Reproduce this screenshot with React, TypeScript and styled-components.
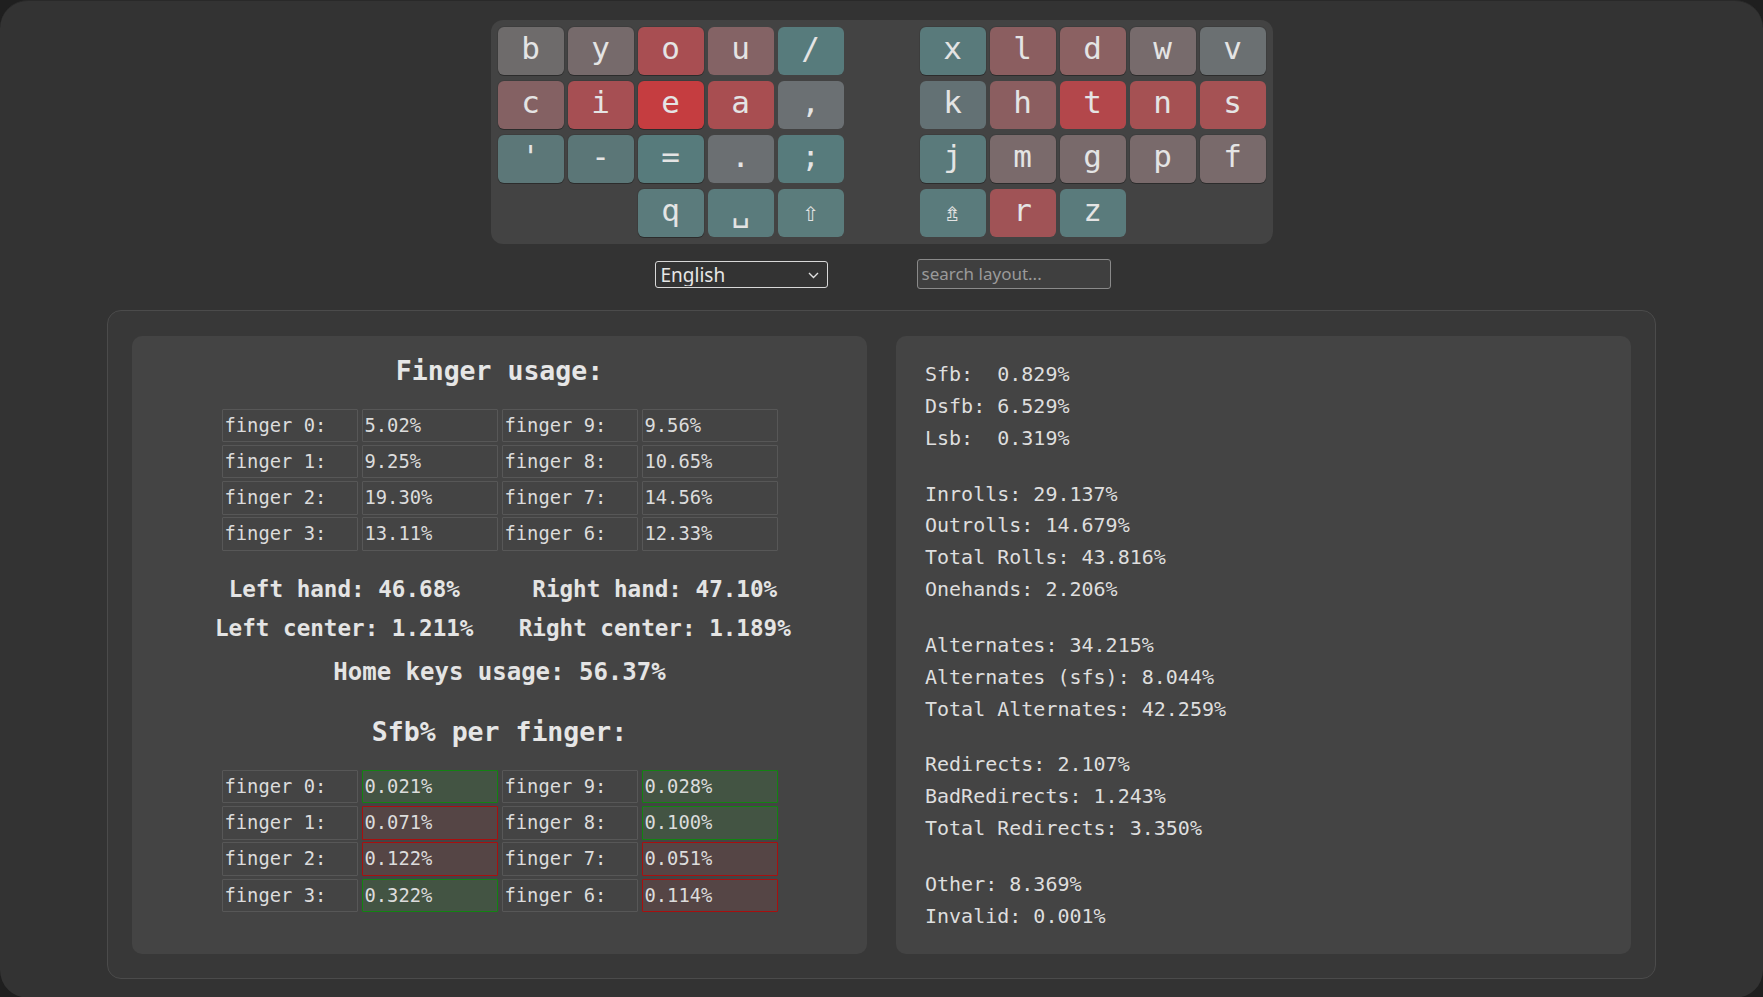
import styled, { createGlobalStyle } from "styled-components";

const GlobalStyle = createGlobalStyle`
  html, body {
    margin: 0;
    padding: 0;
    background: #1f1f1f;
  }
  body {
    font-family: "DejaVu Sans Mono", "Liberation Mono", monospace;
    color: #e0e0e0;
  }
  * {
    box-sizing: border-box;
  }
`;

type KeyData = { label: string; color: string; edge?: boolean; small?: boolean } | null;

const leftHand: KeyData[] = [
  { label: "b", color: "#6e6b6b", edge: true },
  { label: "y", color: "#766a6b", edge: true },
  { label: "o", color: "#a84e52", edge: true },
  { label: "u", color: "#846365" },
  { label: "/", color: "#577b7c" },
  { label: "c", color: "#846163", edge: true },
  { label: "i", color: "#a64f53", edge: true },
  { label: "e", color: "#c53d40", edge: true },
  { label: "a", color: "#a84e51" },
  { label: ",", color: "#6b7073" },
  { label: "'", color: "#5c7778", edge: true },
  { label: "-", color: "#5b7677", edge: true },
  { label: "=", color: "#577b7c", edge: true },
  { label: ".", color: "#6b6f72" },
  { label: ";", color: "#577b7c" },
  null,
  null,
  { label: "q", color: "#5b7b7c", edge: true },
  { label: "␣", color: "#5a7b7c" },
  { label: "⇧", color: "#5b7c7c", small: true },
];

const rightHand: KeyData[] = [
  { label: "x", color: "#597a7b", edge: true },
  { label: "l", color: "#8b5e60", edge: true },
  { label: "d", color: "#8b6162", edge: true },
  { label: "w", color: "#776b6c", edge: true },
  { label: "v", color: "#6b7072", edge: true },
  { label: "k", color: "#637174" },
  { label: "h", color: "#8b5e60" },
  { label: "t", color: "#b3474b" },
  { label: "n", color: "#a55153" },
  { label: "s", color: "#a55254" },
  { label: "j", color: "#5a7a7b", edge: true },
  { label: "m", color: "#7a6a6b", edge: true },
  { label: "g", color: "#796a6b", edge: true },
  { label: "p", color: "#796a6b", edge: true },
  { label: "f", color: "#796a6b", edge: true },
  { label: "⇯", color: "#5a7b7c", small: true },
  { label: "r", color: "#a05356" },
  { label: "z", color: "#5a7b7c" },
  null,
  null,
];

const fingerUsage = [
  ["finger 0:", "5.02%", "finger 9:", "9.56%"],
  ["finger 1:", "9.25%", "finger 8:", "10.65%"],
  ["finger 2:", "19.30%", "finger 7:", "14.56%"],
  ["finger 3:", "13.11%", "finger 6:", "12.33%"],
];

type Tone = "plain" | "good" | "bad";

const sfbPerFinger: [string, string, Tone, string, string, Tone][] = [
  ["finger 0:", "0.021%", "good", "finger 9:", "0.028%", "good"],
  ["finger 1:", "0.071%", "bad", "finger 8:", "0.100%", "good"],
  ["finger 2:", "0.122%", "bad", "finger 7:", "0.051%", "bad"],
  ["finger 3:", "0.322%", "good", "finger 6:", "0.114%", "bad"],
];

const statGroups = [
  ["Sfb:  0.829%", "Dsfb: 6.529%", "Lsb:  0.319%"],
  ["Inrolls: 29.137%", "Outrolls: 14.679%", "Total Rolls: 43.816%", "Onehands: 2.206%"],
  ["Alternates: 34.215%", "Alternates (sfs): 8.044%", "Total Alternates: 42.259%"],
  ["Redirects: 2.107%", "BadRedirects: 1.243%", "Total Redirects: 3.350%"],
  ["Other: 8.369%", "Invalid: 0.001%"],
];

const App = () => {
  return (
    <>
      <GlobalStyle />
      <Page>
        <KeyboardPanel>
          <Hand>
            {leftHand.map((key, i) =>
              key ? (
                <Key key={i} $color={key.color} $edge={key.edge} $small={key.small}>
                  {key.label}
                </Key>
              ) : (
                <EmptySlot key={i} />
              ),
            )}
          </Hand>
          <Hand>
            {rightHand.map((key, i) =>
              key ? (
                <Key key={i} $color={key.color} $edge={key.edge} $small={key.small}>
                  {key.label}
                </Key>
              ) : (
                <EmptySlot key={i} />
              ),
            )}
          </Hand>
        </KeyboardPanel>

        <Controls>
          <SelectWrap>
            <LanguageSelect defaultValue="english">
              <option value="english">English</option>
            </LanguageSelect>
            <Chevron width="11" height="7" viewBox="0 0 11 7">
              <path d="M1 1l4.5 4.5L10 1" fill="none" stroke="#e0e0e0" strokeWidth="1.4" />
            </Chevron>
          </SelectWrap>
          <SearchInput placeholder="search layout..." />
        </Controls>

        <StatsPanel>
          <FingerCard>
            <Heading>Finger usage:</Heading>
            <CellGrid>
              {fingerUsage.flat().map((text, i) => (
                <Cell key={i} $tone="plain">
                  {text}
                </Cell>
              ))}
            </CellGrid>
            <HandGrid>
              <BoldLine>Left hand: 46.68%</BoldLine>
              <BoldLine>Right hand: 47.10%</BoldLine>
              <BoldLine>Left center: 1.211%</BoldLine>
              <BoldLine>Right center: 1.189%</BoldLine>
            </HandGrid>
            <HomeLine>Home keys usage: 56.37%</HomeLine>
            <Heading $top={24}>Sfb% per finger:</Heading>
            <CellGrid>
              {sfbPerFinger.map(([l1, v1, t1, l2, v2, t2]) => [
                <Cell key={l1} $tone="plain">{l1}</Cell>,
                <Cell key={l1 + v1} $tone={t1}>{v1}</Cell>,
                <Cell key={l2} $tone="plain">{l2}</Cell>,
                <Cell key={l2 + v2} $tone={t2}>{v2}</Cell>,
              ])}
            </CellGrid>
          </FingerCard>

          <StatsCard>
            {statGroups.map((group, i) => (
              <StatGroup key={i}>
                {group.map((line) => (
                  <StatLine key={line}>{line}</StatLine>
                ))}
              </StatGroup>
            ))}
          </StatsCard>
        </StatsPanel>
      </Page>
    </>
  );
};

export default App;

const Page = styled.div`
  min-height: 100vh;
  background: #333333;
  border-radius: 28px;
  border-top: 1px solid #292929;
  padding-top: 19px;
  padding-bottom: 19px;
  display: flex;
  flex-direction: column;
  align-items: center;
`;

const KeyboardPanel = styled.div`
  display: flex;
  gap: 76px;
  padding: 7px;
  background: #434343;
  border-radius: 12px;
`;

const Hand = styled.div`
  display: grid;
  grid-template-columns: repeat(5, 66px);
  grid-auto-rows: 48px;
  gap: 6px 4px;
`;

const EmptySlot = styled.div``;

const Key = styled.div<{ $color: string; $edge?: boolean; $small?: boolean }>`
  background: ${({ $color }) => $color};
  border-radius: 6px;
  display: flex;
  justify-content: center;
  align-items: center;
  padding-bottom: ${({ $small }) => ($small ? "3px" : "6px")};
  color: #e4e4e4;
  font-family: "DejaVu Sans Mono", monospace;
  font-size: ${({ $small }) => ($small ? "27px" : "31px")};
  box-shadow: ${({ $edge }) =>
    $edge ? "0 1px 0 0 rgba(0, 0, 0, 0.28), 0 0 0 1px rgba(0, 0, 0, 0.08)" : "none"};
`;

const Controls = styled.div`
  display: flex;
  align-items: center;
  gap: 89px;
  margin-top: 15px;
  padding-left: 2px;
`;

const SelectWrap = styled.div`
  position: relative;
  width: 173px;
  height: 27px;
`;

const LanguageSelect = styled.select`
  appearance: none;
  width: 100%;
  height: 100%;
  background: #333333;
  color: #e6e6e6;
  border: 1px solid #d8d8d8;
  border-radius: 3px;
  padding: 0 0 1px 5px;
  font-family: "Noto Sans", "Open Sans", sans-serif;
  font-size: 19px;
  outline: none;
`;

const Chevron = styled.svg`
  position: absolute;
  right: 9px;
  top: 11px;
  pointer-events: none;
`;

const SearchInput = styled.input`
  width: 194px;
  height: 30px;
  background: #3f3f3f;
  border: 1px solid #8a8a8a;
  border-radius: 3px;
  padding: 0 0 1px 4px;
  color: #e0e0e0;
  font-family: "Noto Sans", "Open Sans", sans-serif;
  font-size: 17px;
  outline: none;

  &::placeholder {
    color: #9a9a9a;
  }
`;

const StatsPanel = styled.section`
  margin-top: 21px;
  width: 1549px;
  display: grid;
  grid-template-columns: 735px 735px;
  gap: 29px;
  padding: 25px 24px 24px;
  background: #383838;
  border: 1px solid #4b4b4b;
  border-radius: 14px;
`;

const FingerCard = styled.div`
  background: #444444;
  border-radius: 10px;
  padding: 19px 0 41px;
  display: flex;
  flex-direction: column;
  align-items: center;
`;

const Heading = styled.h2<{ $top?: number }>`
  margin: ${({ $top }) => $top ?? 0}px 0 21.5px;
  font-family: "DejaVu Sans Mono", monospace;
  font-weight: bold;
  font-size: 26.5px;
  line-height: 32px;
  color: #e6e6e6;
`;

const CellGrid = styled.div`
  display: grid;
  grid-template-columns: repeat(4, 136px);
  grid-auto-rows: 33.5px;
  gap: 2.8px 4px;
`;

const toneStyles: Record<Tone, { bg: string; border: string }> = {
  plain: { bg: "transparent", border: "#575757" },
  good: { bg: "#435443", border: "#128312" },
  bad: { bg: "#554545", border: "#a80f0f" },
};

const Cell = styled.div<{ $tone: Tone }>`
  border: 1px solid ${({ $tone }) => toneStyles[$tone].border};
  background: ${({ $tone }) => toneStyles[$tone].bg};
  border-radius: 1px;
  padding-left: 2px;
  font-size: 18.8px;
  line-height: 32px;
  color: #dcdcdc;
  white-space: nowrap;
`;

const HandGrid = styled.div`
  margin-top: 19px;
  display: grid;
  grid-template-columns: 310.5px 310.5px;
`;

const BoldLine = styled.div`
  text-align: center;
  font-weight: bold;
  font-size: 22.6px;
  line-height: 39.5px;
  color: #e4e4e4;
  white-space: nowrap;
`;

const HomeLine = styled(BoldLine)`
  margin-top: 4px;
  font-size: 24px;
`;

const StatsCard = styled.div`
  background: #444444;
  border-radius: 10px;
  padding: 23px 29px 21px;
`;

const StatGroup = styled.div`
  margin-bottom: 23.8px;

  &:last-child {
    margin-bottom: 0;
  }
`;

const StatLine = styled.div`
  font-size: 20px;
  line-height: 31.9px;
  white-space: pre;
  color: #dedede;
`;
